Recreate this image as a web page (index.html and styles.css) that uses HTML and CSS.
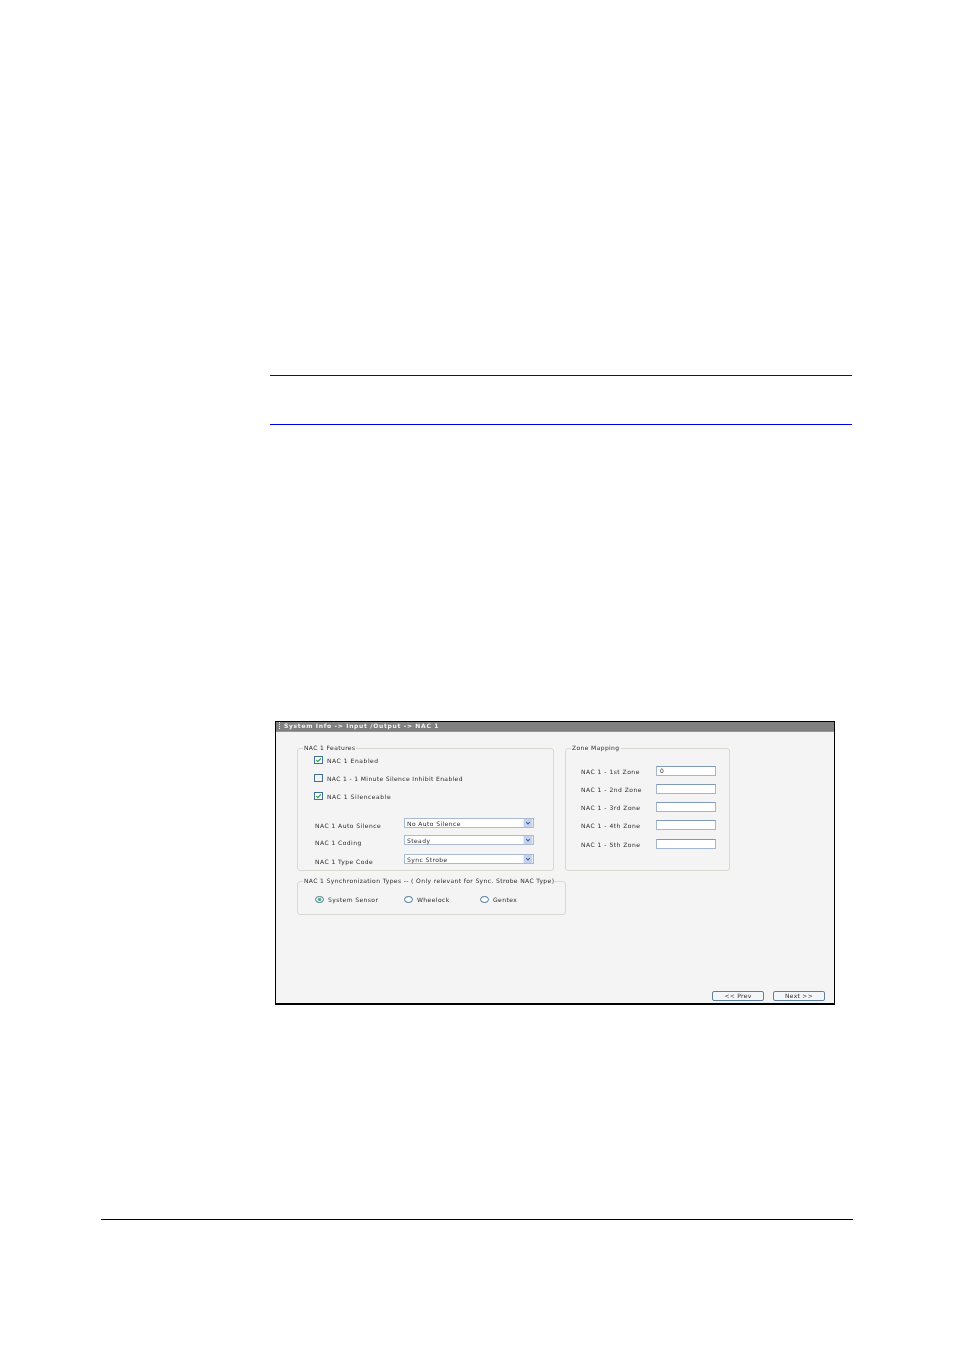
FILE: index.html
```html
<!DOCTYPE html>
<html lang="en">
<head>
<meta charset="utf-8">
<title>System Info - NAC 1</title>
<link rel="stylesheet" href="styles.css">
</head>
<body>
<main class="page">
  <div class="note-rule"></div>
  <div class="note-gap"></div>
  <div class="note-rule"></div>

  <section class="window">
    <div class="titlebar"><span class="grip"></span><span>System Info -&gt; Input /Output -&gt; NAC 1</span></div>
    <div class="content">
      <div class="columns">
        <fieldset class="group features">
          <legend>NAC 1 Features</legend>
          <div class="checks">
            <div class="check-row wide"><svg class="box" viewBox="0 0 9 8"><rect x=".5" y=".5" width="8" height="7" fill="#fff" stroke="#3f6f95"/><path d="M2.2 4l1.6 1.6L6.8 2.5" fill="none" stroke="#2fa84f" stroke-width="1.2"/></svg><span>NAC 1 Enabled</span></div>
            <div class="check-row"><svg class="box" viewBox="0 0 9 8"><rect x=".5" y=".5" width="8" height="7" fill="#f4f4f0" stroke="#3f6f95"/></svg><span>NAC 1 - 1 Minute Silence Inhibit Enabled</span></div>
            <div class="check-row wide"><svg class="box" viewBox="0 0 9 8"><rect x=".5" y=".5" width="8" height="7" fill="#fff" stroke="#3f6f95"/><path d="M2.2 4l1.6 1.6L6.8 2.5" fill="none" stroke="#2fa84f" stroke-width="1.2"/></svg><span>NAC 1 Silenceable</span></div>
          </div>
          <div class="selects">
            <div class="select-row"><span class="select-label">NAC 1 Auto Silence</span><div class="select"><span>No Auto Silence</span><svg class="arrow" viewBox="0 0 10 9"><rect width="10" height="9" fill="#c3d3ef"/><path d="M3 3.5l2 2 2-2" fill="none" stroke="#4d6185" stroke-width="1.2"/></svg></div></div>
            <div class="select-row second"><span class="select-label">NAC 1 Coding</span><div class="select"><span>Steady</span><svg class="arrow" viewBox="0 0 10 9"><rect width="10" height="9" fill="#c3d3ef"/><path d="M3 3.5l2 2 2-2" fill="none" stroke="#4d6185" stroke-width="1.2"/></svg></div></div>
            <div class="select-row third"><span class="select-label">NAC 1 Type Code</span><div class="select"><span>Sync Strobe</span><svg class="arrow" viewBox="0 0 10 9"><rect width="10" height="9" fill="#c3d3ef"/><path d="M3 3.5l2 2 2-2" fill="none" stroke="#4d6185" stroke-width="1.2"/></svg></div></div>
          </div>
        </fieldset>
        <fieldset class="group zones">
          <legend>Zone Mapping</legend>
          <div class="zone-list">
            <div class="zone-row"><span class="zone-label">NAC 1 - 1st Zone</span><div class="field">0</div></div>
            <div class="zone-row"><span class="zone-label">NAC 1 - 2nd Zone</span><div class="field"></div></div>
            <div class="zone-row"><span class="zone-label">NAC 1 - 3rd Zone</span><div class="field"></div></div>
            <div class="zone-row"><span class="zone-label">NAC 1 - 4th Zone</span><div class="field"></div></div>
            <div class="zone-row last"><span class="zone-label">NAC 1 - 5th Zone</span><div class="field"></div></div>
          </div>
        </fieldset>
      </div>
      <fieldset class="group sync">
        <legend>NAC 1 Synchronization Types -- ( Only relevant for Sync. Strobe NAC Type)</legend>
        <div class="radios">
          <div class="radio-item r1"><svg class="radio" viewBox="0 0 9 7"><ellipse cx="4.5" cy="3.5" rx="4" ry="3" fill="#fff" stroke="#3f6f95"/><ellipse cx="4.5" cy="3.5" rx="1.8" ry="1.4" fill="#3fb45f"/></svg><span>System Sensor</span></div>
          <div class="radio-item r2"><svg class="radio" viewBox="0 0 9 7"><ellipse cx="4.5" cy="3.5" rx="4" ry="3" fill="#fff" stroke="#3f6f95"/></svg><span>Wheelock</span></div>
          <div class="radio-item"><svg class="radio" viewBox="0 0 9 7"><ellipse cx="4.5" cy="3.5" rx="4" ry="3" fill="#fff" stroke="#3f6f95"/></svg><span>Gentex</span></div>
        </div>
      </fieldset>
      <div class="actions">
        <div class="btn">&lt;&lt; Prev</div>
        <div class="btn">Next &gt;&gt;</div>
      </div>
    </div>
  </section>

  <div class="footer-rule"></div>
</main>
</body>
</html>
```
FILE: styles.css
```css
* { box-sizing: border-box; }
html, body { margin: 0; background: #fff; }
.page {
  width: 954px;
  height: 1350px;
  overflow: hidden;
  padding-top: 375px;
  font-family: "DejaVu Sans", sans-serif;
  font-size: 6px;
  color: #2a2a2a;
}
.note-rule { height: 1px; margin-left: 270px; width: 582px; background: #0000e6; }
.note-gap { height: 48px; }

.window {
  margin: 296px 0 0 275px;
  width: 560px;
  height: 284px;
  border: 1px solid #000;
  border-bottom-width: 2px;
  background: #f4f4f4;
  display: flex;
  flex-direction: column;
}
.titlebar {
  height: 10px;
  background: #808080;
  border-bottom: 1px solid #8f9aa0;
  color: #f2f2f2;
  display: flex;
  align-items: center;
  gap: 4px;
  padding: 0 0 2px 3px;
  font-size: 6px;
  letter-spacing: .68px;
  font-weight: 700;
  filter: blur(.25px);
}
.grip { width: 1px; height: 7px; border-left: 1px dotted #eee; }
.content {
  flex: 1;
  padding: 12px 0 0 21px;
  display: flex;
  flex-direction: column;
}
.columns { display: flex; gap: 11px; }

.group {
  margin: 0;
  padding: 0;
  min-width: 0;
  border: 1px solid #d9d9d0;
  border-radius: 3px;
  filter: blur(.2px);
}
.group legend {
  margin-left: 5px;
  padding: 0 1px;
  line-height: 8px;
  font-size: 6px;
  letter-spacing: .38px;
  white-space: nowrap;
}
.features { width: 257px; height: 127px; }
.zones { width: 165px; height: 127px; }
.sync { width: 269px; height: 38px; margin-top: 6px; }

.checks { display: flex; flex-direction: column; gap: 10px; padding: 4px 0 0 16px; }
.check-row { display: flex; align-items: center; gap: 4px; height: 8px; letter-spacing: .37px; }
.check-row.wide { letter-spacing: .55px; }
.box { width: 9px; height: 8px; flex: none; }

.selects { padding: 18px 0 0 17px; }
.select-row { display: flex; align-items: center; height: 10px; }
.second { margin-top: 7px; }
.third { margin-top: 9px; }
.select-label { width: 89px; padding-top: 5px; letter-spacing: .46px; white-space: nowrap; }
.select {
  width: 130px;
  height: 10px;
  background: #fff;
  border: 1px solid #a9bad2;
  display: flex;
  align-items: center;
  justify-content: space-between;
  padding-left: 2px;
  letter-spacing: .42px;
}
.arrow { width: 10px; height: 8px; }

.zone-list { padding-left: 15px; }
.zone-row { display: flex; align-items: center; height: 10px; margin-top: 8px; }
.zone-row:first-child { margin-top: 14px; }
.zone-row.last { margin-top: 9px; }
.zone-label { width: 75px; letter-spacing: .5px; white-space: nowrap; }
.field {
  width: 60px;
  height: 10px;
  background: #fff;
  border: 1px solid #a3b6cf;
  border-top-color: #7f9ab8;
  line-height: 8px;
  padding-left: 3px;
}

.radios { display: flex; padding: 10px 0 0 17px; }
.radio-item { display: flex; align-items: center; gap: 4px; letter-spacing: .42px; height: 8px; }
.r1 { width: 89px; }
.r2 { width: 76px; }
.radio { width: 9px; height: 7px; flex: none; }

.actions {
  margin-top: auto;
  display: flex;
  justify-content: flex-end;
  gap: 9px;
  padding: 0 9px 2px 0;
}
.btn {
  width: 52px;
  height: 10px;
  background: #f4f6fa;
  border: 1px solid #5f7f9f;
  border-radius: 2px;
  text-align: center;
  line-height: 8px;
  letter-spacing: .3px;
  filter: blur(.2px);
}

.footer-rule { height: 1px; width: 752px; margin: 214px 0 0 101px; background: #000; }
```
